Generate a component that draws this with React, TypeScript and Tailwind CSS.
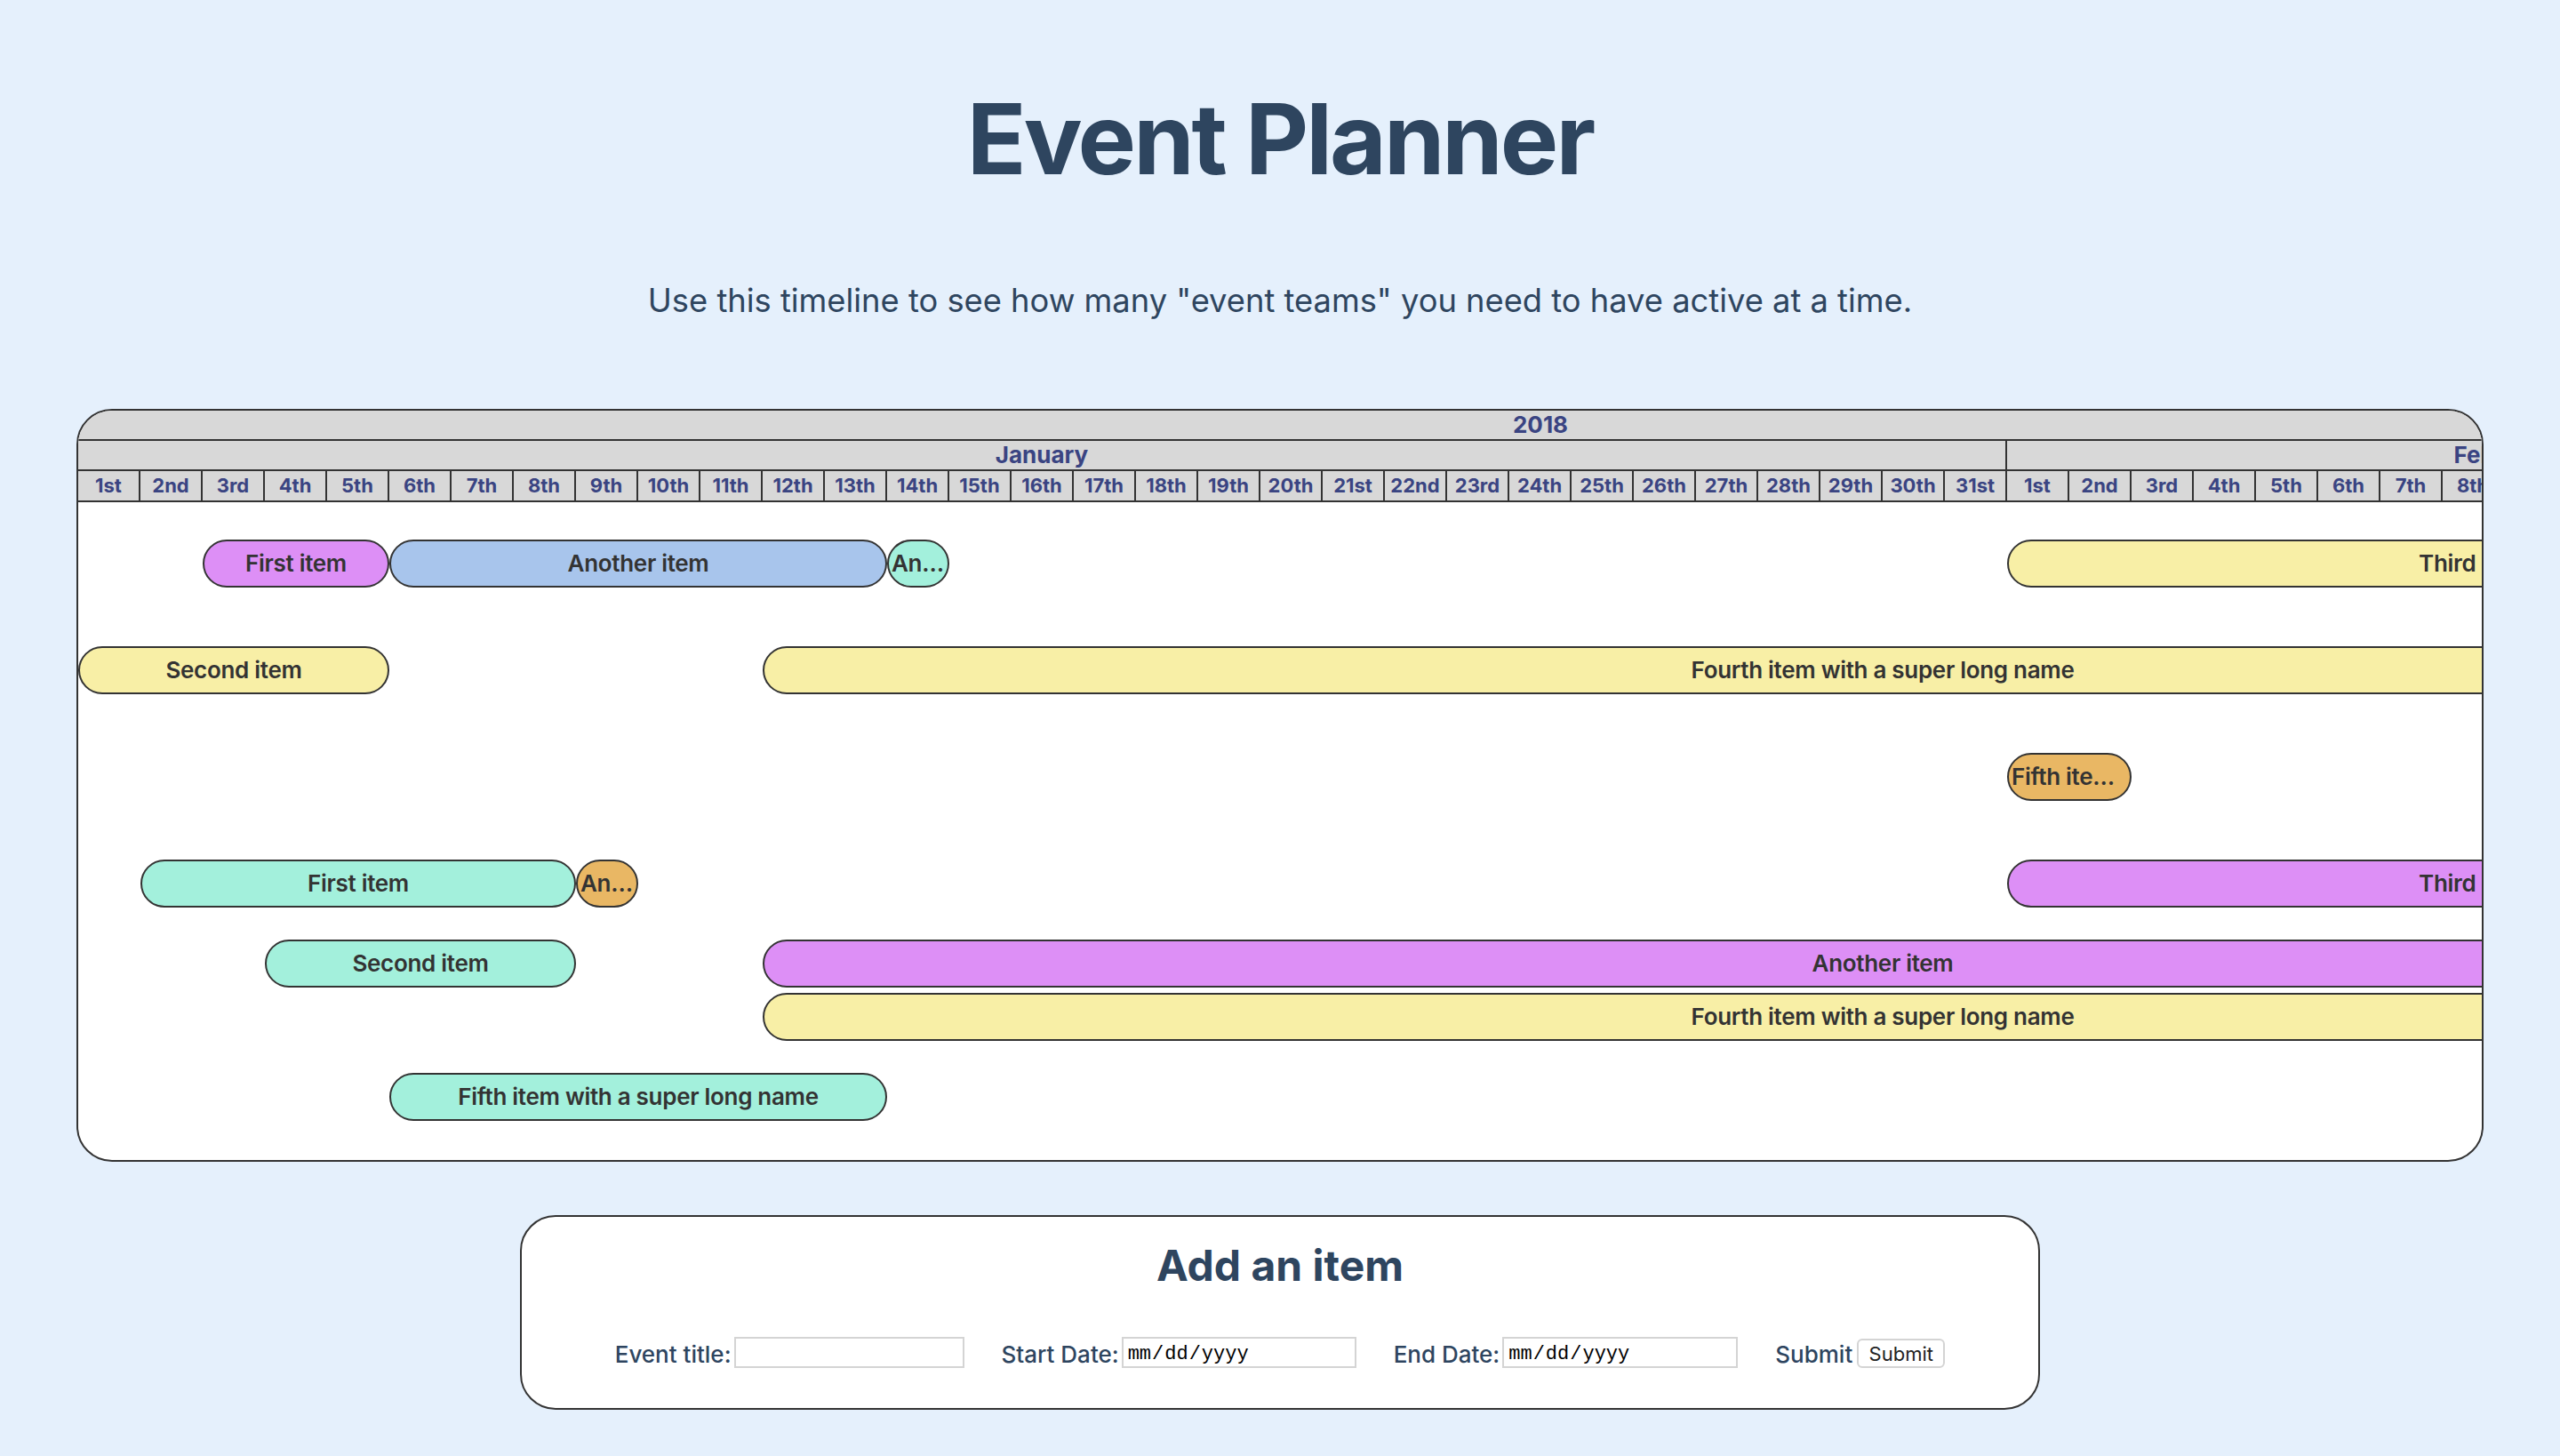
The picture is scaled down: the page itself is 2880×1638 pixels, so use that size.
import React from "react";

const purple = "bg-[#dd8ff6]";
const blue = "bg-[#a8c5ec]";
const mint = "bg-[#a3f0dc]";
const yellow = "bg-[#f8efa6]";
const orange = "bg-[#e9b764]";

type Bar = { label: string; color: string; pos: string };

const rows: { mt: string; bars: Bar[] }[] = [
  {
    mt: "mt-[42px]",
    bars: [
      { label: "First item", color: purple, pos: "col-start-3 col-span-3" },
      { label: "Another item", color: blue, pos: "col-start-6 col-span-8" },
      { label: "Another item", color: mint, pos: "col-start-14 col-span-1" },
      { label: "Third item", color: yellow, pos: "col-start-32 col-span-15" },
    ],
  },
  {
    mt: "mt-[66px]",
    bars: [
      { label: "Second item", color: yellow, pos: "col-start-1 col-span-5" },
      { label: "Fourth item with a super long name", color: yellow, pos: "col-start-12 col-span-36" },
    ],
  },
  {
    mt: "mt-[66px]",
    bars: [{ label: "Fifth item with a super long name", color: orange, pos: "col-start-32 col-span-2" }],
  },
  {
    mt: "mt-[66px]",
    bars: [
      { label: "First item", color: mint, pos: "col-start-2 col-span-7" },
      { label: "Another item", color: orange, pos: "col-start-9 col-span-1" },
      { label: "Third item", color: purple, pos: "col-start-32 col-span-15" },
    ],
  },
  {
    mt: "mt-[36px]",
    bars: [
      { label: "Second item", color: mint, pos: "col-start-4 col-span-5" },
      { label: "Another item", color: purple, pos: "col-start-12 col-span-36" },
    ],
  },
  {
    mt: "mt-[6px]",
    bars: [{ label: "Fourth item with a super long name", color: yellow, pos: "col-start-12 col-span-36" }],
  },
  {
    mt: "mt-[36px]",
    bars: [{ label: "Fifth item with a super long name", color: mint, pos: "col-start-6 col-span-8" }],
  },
];

function ordinal(n: number) {
  if (n % 10 === 1 && n !== 11) return n + "st";
  if (n % 10 === 2 && n !== 12) return n + "nd";
  if (n % 10 === 3 && n !== 13) return n + "rd";
  return n + "th";
}

const days = [
  ...Array.from({ length: 31 }, (_, i) => ordinal(i + 1)),
  ...Array.from({ length: 16 }, (_, i) => ordinal(i + 1)),
];

function Timeline() {
  return (
    <div className="mx-auto mt-[104px] w-[2708px] overflow-hidden rounded-[40px] border-2 border-[#333] bg-white">
      <div className="w-[3290px]">
        <div className="h-[34px] border-b-2 border-[#333] bg-[#d8d8d8] text-center text-[26px] font-bold leading-[32px] text-[#3a4482]">
          2018
        </div>
        <div className="flex h-[34px] border-b-2 border-[#333] bg-[#d8d8d8] text-[26px] font-bold leading-[32px] text-[#3a4482]">
          <div className="w-[2170px] border-r-2 border-[#333] text-center">January</div>
          <div className="w-[1120px] text-center">February</div>
        </div>
        <div className="flex h-[35px] border-b-2 border-[#333] bg-[#d8d8d8] text-[22px] font-bold leading-[33px] text-[#3a4482]">
          {days.map((d, i) => (
            <div key={i} className="w-[70px] shrink-0 border-r-2 border-[#333] text-center">
              {d}
            </div>
          ))}
        </div>
        <div className="pb-[44px]">
          {rows.map((row, r) => (
            <div key={r} className={`grid h-[54px] grid-cols-[repeat(47,70px)] ${row.mt}`}>
              {row.bars.map((b, i) => (
                <div
                  key={i}
                  className={`${b.pos} ${b.color} h-[54px] truncate rounded-full border-2 border-[#333] px-[3px] text-center text-[26px] font-semibold leading-[50px] tracking-[-0.3px] text-[#333]`}
                >
                  {b.label}
                </div>
              ))}
            </div>
          ))}
        </div>
      </div>
    </div>
  );
}

function AddItem() {
  const input = "h-[35px] border-2 border-[#d4d4d4] bg-white px-1 text-[22px] text-black";
  const date = `${input} pt-[5px] font-['Liberation_Mono',monospace] [&::-webkit-calendar-picker-indicator]:hidden`;
  return (
    <div className="mx-auto mt-[60px] w-[1710px] rounded-[40px] border-2 border-[#333] bg-white pb-[45px] pt-[31px]">
      <h2 className="text-center text-[48px] font-bold leading-none text-[#2e455f]">Add an item</h2>
      <form className="mt-[56px] flex items-end justify-center gap-[42px] text-[26px] font-medium leading-none text-[#2e455f]">
        <label className="flex items-end gap-[3px]">
          <span className="pb-[2px]">Event title:</span>
          <input type="text" className={`${input} w-[259px]`} />
        </label>
        <label className="flex items-end gap-[3px]">
          <span className="pb-[2px]">Start Date:</span>
          <input type="date" className={`${date} w-[264px]`} />
        </label>
        <label className="flex items-end gap-[3px]">
          <span className="pb-[2px]">End Date:</span>
          <input type="date" className={`${date} w-[265px]`} />
        </label>
        <label className="flex items-end gap-[5px]">
          <span className="pb-[2px]">Submit</span>
          <button
            type="button"
            className="h-[33px] w-[99px] rounded-[6px] border-2 border-[#d4d4d4] bg-white text-[22px] font-normal text-[#222]"
          >
            Submit
          </button>
        </label>
      </form>
    </div>
  );
}

export default function App() {
  return (
    <main className="min-h-screen bg-[#e5f0fc] pt-[101px] font-['Inter','Noto_Sans',sans-serif]">
      <h1 className="text-center text-[110px] font-bold leading-none tracking-[-3px] text-[#2e455f]">Event Planner</h1>
      <p className="mt-[109px] text-center text-[36.3px] leading-none text-[#2e455f]">
        Use this timeline to see how many "event teams" you need to have active at a time.
      </p>
      <Timeline />
      <AddItem />
    </main>
  );
}
